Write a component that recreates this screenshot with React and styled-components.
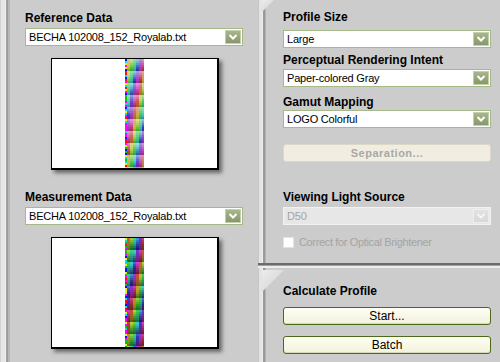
import React from 'react';
import styled, { createGlobalStyle } from 'styled-components';

const GlobalStyle = createGlobalStyle`
  html, body {
    margin: 0;
    padding: 0;
    background: #cccccc;
  }
  body {
    font-family: "Liberation Sans", Arial, sans-serif;
  }
`;

const Window = styled.div`
  display: flex;
  width: 500px;
  height: 362px;
  overflow: hidden;
  background: #cccccc;
`;

const LeftPanel = styled.div`
  width: 258px;
  flex-shrink: 0;
  box-sizing: border-box;
  padding: 12px 15px 0 25px;
  display: flex;
  flex-direction: column;
  box-shadow: inset 1px 0 0 #d2d2d2, inset 5px 0 0 #e6e6e6, inset 6px 0 0 #f0f0f0,
    inset 8px 0 0 #9e9e9e, inset 10px 0 0 #b6b6b6;
`;

const RightColumn = styled.div`
  flex: 1;
  display: flex;
  flex-direction: column;
`;

const RightPanel = styled.div`
  position: relative;
  height: ${p => p.$height}px;
  box-sizing: border-box;
  padding: ${p => p.$top}px 9px 0 25px;
  display: flex;
  flex-direction: column;
  box-shadow: ${p => p.$edge}, inset 1px 0 0 #c6c6c6, inset 4px 0 0 #e4e4e4,
    inset 5px 0 0 #efefef, inset 7px 0 0 #999999, inset 8px 0 0 #b4b4b4;

  &::before {
    content: '';
    position: absolute;
    top: ${p => p.$cornerTop}px;
    left: 4px;
    width: ${p => p.$corner}px;
    height: ${p => p.$corner}px;
    clip-path: polygon(0 0, 100% 0, 0 100%);
    background: linear-gradient(135deg, #ececec 0%, #dcdcdc 60%);
  }
`;

const Label = styled.div`
  font-weight: bold;
  font-size: 12px;
  line-height: 13px;
  color: #000;
  white-space: nowrap;
  margin-top: ${p => p.$mt || 0}px;
`;

const Select = styled.div`
  display: flex;
  align-items: center;
  height: 18px;
  box-sizing: border-box;
  margin-top: ${p => p.$mt || 0}px;
  padding: 0 1px 0 3px;
  border: 1px solid ${p => (p.$disabled ? '#f2f2f2' : '#a5ba88')};
  background: ${p => (p.$disabled ? '#e7e7e7' : '#ffffff')};
`;

const SelectText = styled.span`
  flex: 1;
  font-size: 11px;
  letter-spacing: -0.2px;
  white-space: nowrap;
  color: ${p => (p.$disabled ? '#a4a4a4' : '#000')};
`;

const DropButton = styled.span`
  width: 16px;
  height: 14px;
  box-sizing: border-box;
  display: flex;
  align-items: center;
  justify-content: center;
  border: 1px solid ${p => (p.$disabled ? '#eeeeee' : '#c4cfb0')};
  background: ${p =>
    p.$disabled
      ? 'linear-gradient(#e2e2e2, #d8d8d8)'
      : 'linear-gradient(#a7b68b, #88986a)'};
`;

const Preview = styled.div`
  width: 168px;
  height: 112px;
  box-sizing: border-box;
  margin: ${p => p.$mt}px 0 0 26px;
  background: #fff;
  border-style: solid;
  border-color: #000;
  border-width: 1px 2px 2px 1px;
  box-shadow: 3px 3px 4px rgba(0, 0, 0, 0.5);
  display: flex;
  justify-content: center;
`;

const ActionButton = styled.div`
  height: 18px;
  box-sizing: border-box;
  margin-top: ${p => p.$mt || 0}px;
  display: flex;
  align-items: center;
  justify-content: center;
  border-radius: 3px;
  font-size: ${p => (p.$disabled ? '11px' : '12px')};
  font-weight: ${p => (p.$disabled ? 'bold' : 'normal')};
  letter-spacing: ${p => (p.$disabled ? '0.5px' : '0')};
  color: ${p => (p.$disabled ? '#a8a8a8' : '#000')};
  border: 1px solid ${p => (p.$disabled ? '#dcd7c6' : '#4d6a1c')};
  background: ${p =>
    p.$disabled ? '#f1ede1' : 'linear-gradient(#fefef4, #f3f2dc)'};
  box-shadow: ${p => (p.$disabled ? 'none' : 'inset 0 -1px 0 #d9d8bd')};
`;

const CheckRow = styled.div`
  display: flex;
  align-items: center;
  gap: 5px;
  margin-top: ${p => p.$mt || 0}px;
`;

const CheckBox = styled.span`
  width: 11px;
  height: 11px;
  background: #fff;
  border: 1px solid #e2e2e2;
  box-sizing: border-box;
`;

const CheckText = styled.span`
  font-size: 11px;
  letter-spacing: -0.35px;
  color: #a4a4a4;
  white-space: nowrap;
`;

function Chevron({ disabled }) {
  return (
    <svg width="10" height="8" viewBox="0 0 10 8">
      <polyline
        points="1.5,2 5,5.5 8.5,2"
        fill="none"
        stroke={disabled ? '#f4f4f4' : '#ffffff'}
        strokeWidth="2"
      />
    </svg>
  );
}

function Dropdown({ value, mt, disabled }) {
  return (
    <Select $mt={mt} $disabled={disabled}>
      <SelectText $disabled={disabled}>{value}</SelectText>
      <DropButton $disabled={disabled}>
        <Chevron disabled={disabled} />
      </DropButton>
    </Select>
  );
}

const DOTS = ['#ff1010', '#10c010', '#1010ff', '#f0f000', '#ff00ff', '#00e0e0'];
const COLS = [3, 3, 3, 3, 3, 2];

function ColorStrip({ dark }) {
  let seed = dark ? 11 : 5;
  const rnd = () => {
    seed = (seed * 9301 + 49297) % 233280;
    return seed / 233280;
  };
  const height = 109;
  const rects = [];
  for (let y = 0; y < height; y += 2) {
    rects.push(
      <rect key={'d' + y} x={0} y={y} width={2} height={2}
        fill={DOTS[Math.floor(rnd() * DOTS.length)]} />
    );
  }
  for (let b = 0; b * 12 < height; b++) {
    let x = 2;
    COLS.forEach((w, c) => {
      const hue = Math.floor((c * 62 + b * 47 + rnd() * 40) % 360);
      for (let r = 0; r < 6; r++) {
        const light = dark ? 52 - r * 5 : 72 - r * 6;
        rects.push(
          <rect key={`c${b}-${c}-${r}`} x={x} y={b * 12 + r * 2} width={w} height={2}
            fill={`hsl(${(hue + r * 8) % 360}, ${dark ? 60 : 55}%, ${light}%)`} />
        );
      }
      x += w;
    });
  }
  return (
    <svg width="19" height={height} viewBox={`0 0 19 ${height}`} style={{ display: 'block' }}>
      {rects}
    </svg>
  );
}

export default function App() {
  return (
    <>
      <GlobalStyle />
      <Window>
        <LeftPanel>
          <Label>Reference Data</Label>
          <Dropdown value="BECHA 102008_152_Royalab.txt" mt={3} />
          <Preview $mt={12}>
            <ColorStrip />
          </Preview>
          <Label $mt={21}>Measurement Data</Label>
          <Dropdown value="BECHA 102008_152_Royalab.txt" mt={3} />
          <Preview $mt={12}>
            <ColorStrip dark />
          </Preview>
        </LeftPanel>
        <RightColumn>
          <RightPanel
            $height={266}
            $top={11}
            $corner={12}
            $cornerTop={0}
            $edge="inset 0 -1px 0 #a0a0a0, inset 0 -3px 0 #6c6c6c"
          >
            <Label>Profile Size</Label>
            <Dropdown value="Large" mt={6} />
            <Label $mt={6}>Perceptual Rendering Intent</Label>
            <Dropdown value="Paper-colored Gray" mt={2} />
            <Label $mt={9}>Gamut Mapping</Label>
            <Dropdown value="LOGO Colorful" mt={1} />
            <ActionButton $disabled $mt={16}>Separation...</ActionButton>
            <Label $mt={29}>Viewing Light Source</Label>
            <Dropdown value="D50" mt={3} disabled />
            <CheckRow $mt={11}>
              <CheckBox />
              <CheckText>Correct for Optical Brightener</CheckText>
            </CheckRow>
          </RightPanel>
          <RightPanel
            $height={96}
            $top={19}
            $corner={22}
            $cornerTop={4}
            $edge="inset 0 2px 0 #eeeeee"
          >
            <Label>Calculate Profile</Label>
            <ActionButton $mt={9}>Start...</ActionButton>
            <ActionButton $mt={11}>Batch</ActionButton>
          </RightPanel>
        </RightColumn>
      </Window>
    </>
  );
}
